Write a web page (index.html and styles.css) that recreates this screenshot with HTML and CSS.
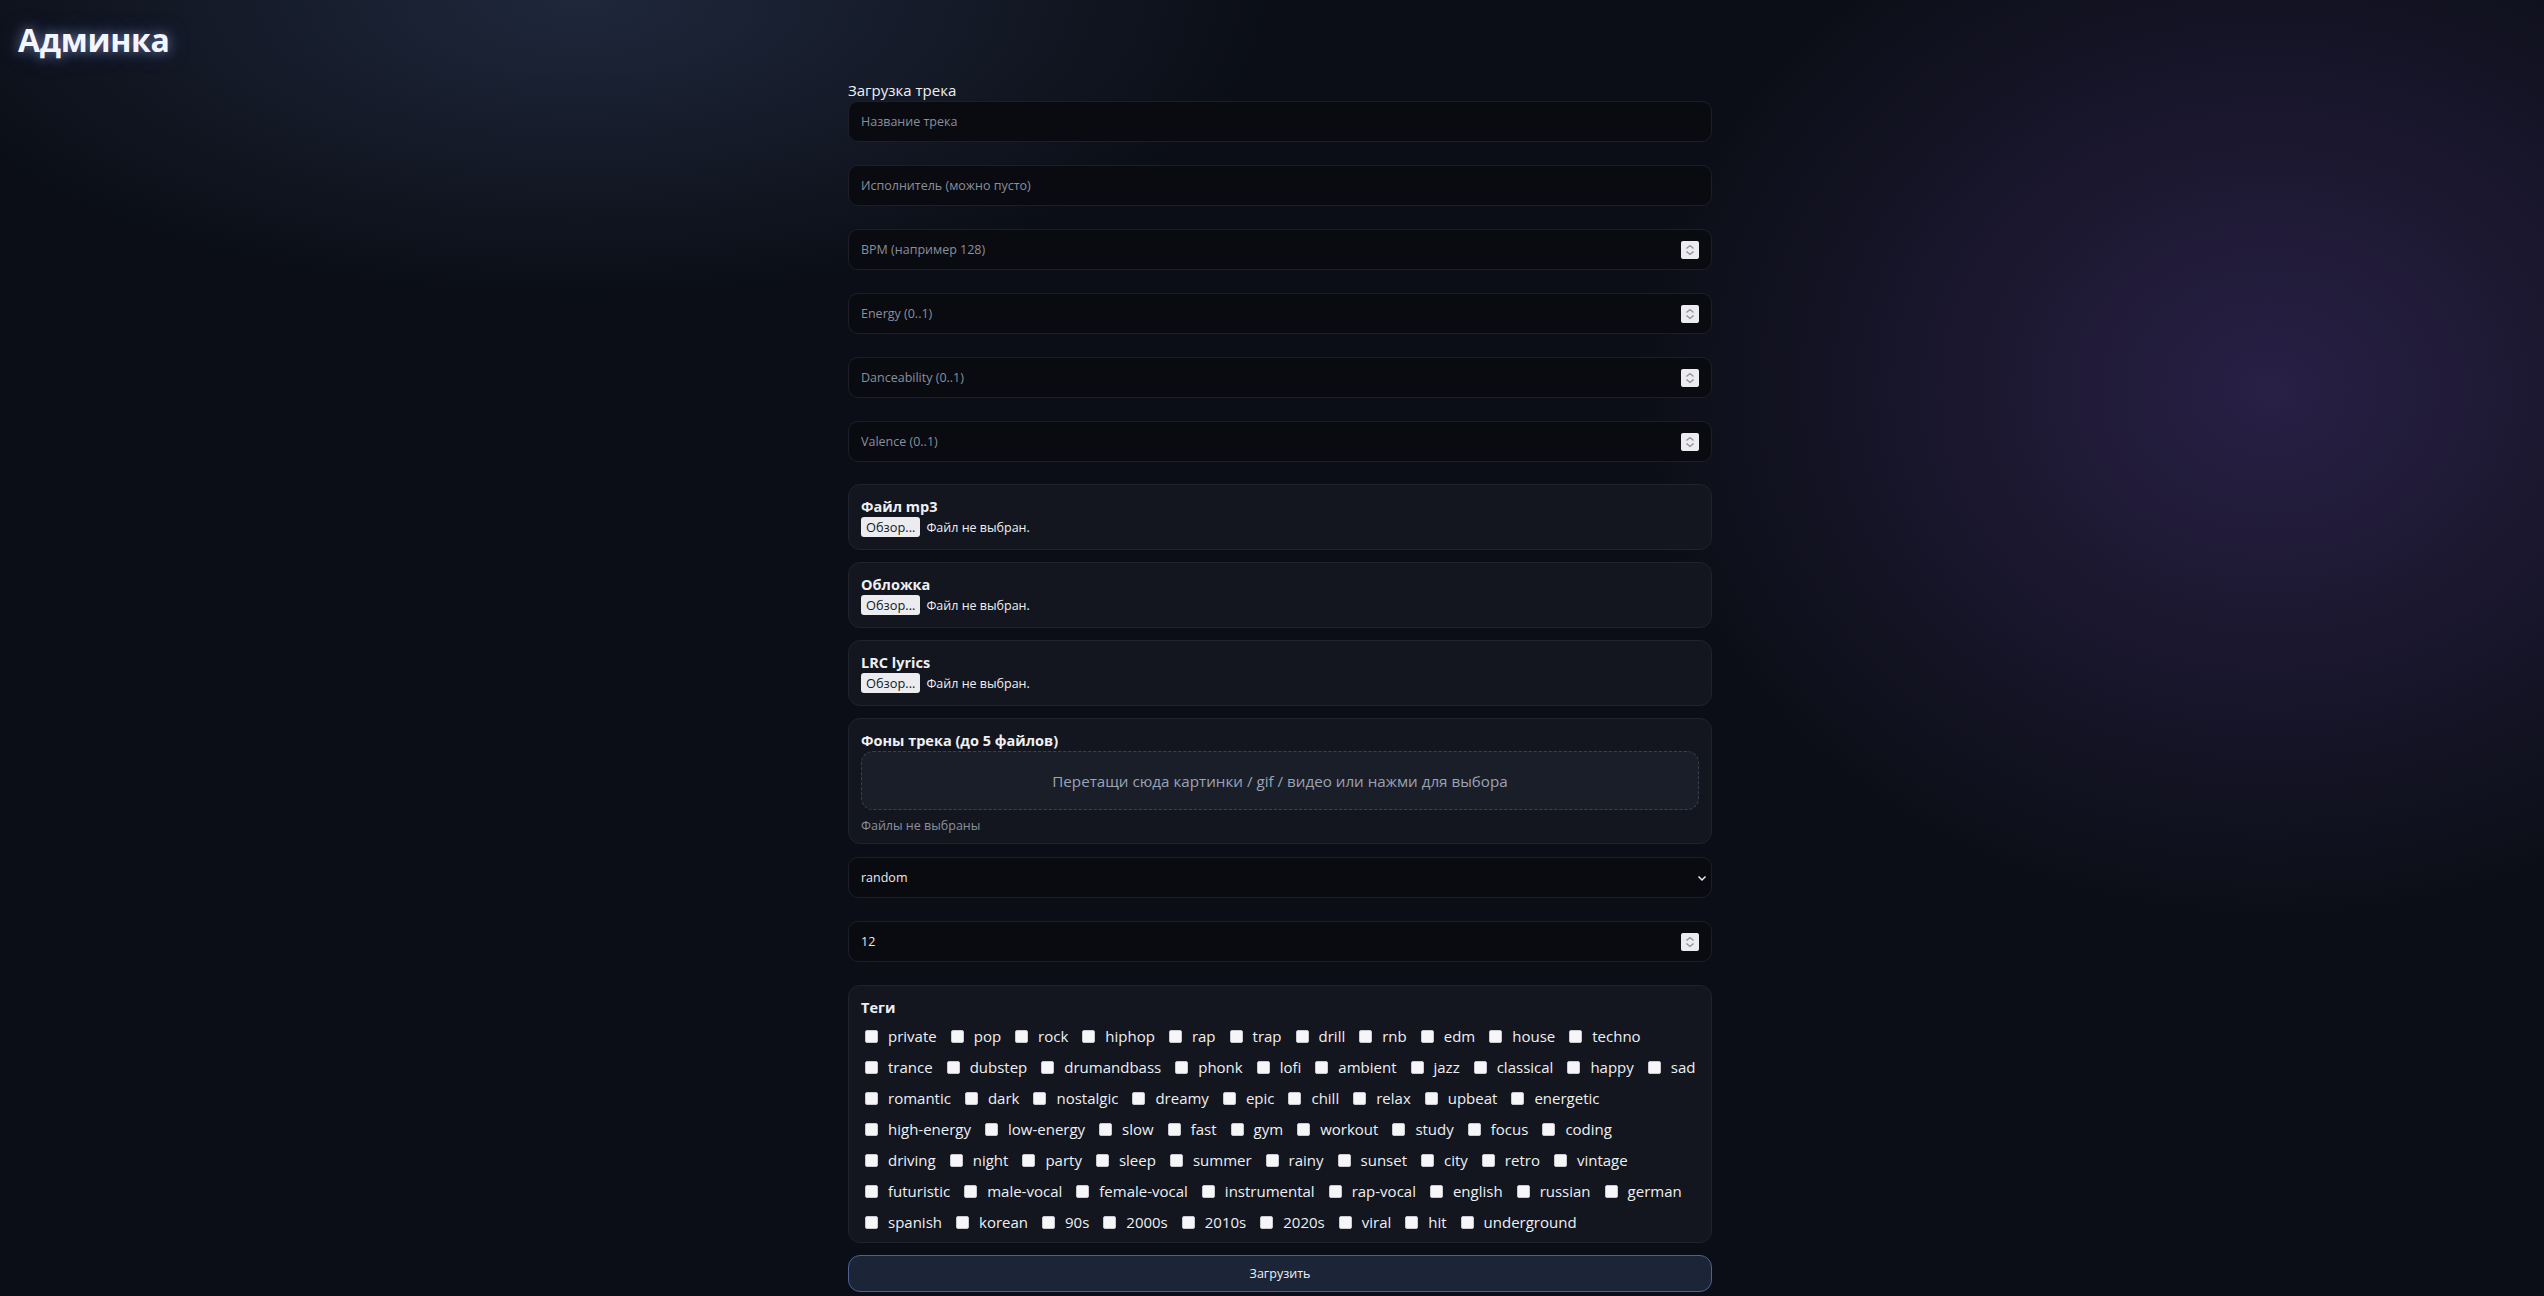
FILE: index.html
```html
<!DOCTYPE html>
<html lang="ru">
<head>
    <meta charset="UTF-8">
    <meta name="viewport" content="width=device-width, initial-scale=1.0">
    <title>Админка</title>
    <link rel="stylesheet" href="styles.css">
</head>
<body>
    <h1 class="page-title">Админка</h1>

    <!-- Upload form -->
    <form class="upload-form" id="uploadForm">
        <div class="form-title">Загрузка трека</div>

        <input class="field" type="text" placeholder="Название трека">
        <input class="field" type="text" placeholder="Исполнитель (можно пусто)">

        <div class="field field-number">
            <input type="number" placeholder="BPM (например 128)">
            <svg class="spin" width="18" height="18" viewBox="0 0 18 18"><path d="M5.5 7.5 9 4.5l3.5 3M5.5 10.5 9 13.5l3.5-3"/></svg>
        </div>
        <div class="field field-number">
            <input type="number" placeholder="Energy (0..1)">
            <svg class="spin" width="18" height="18" viewBox="0 0 18 18"><path d="M5.5 7.5 9 4.5l3.5 3M5.5 10.5 9 13.5l3.5-3"/></svg>
        </div>
        <div class="field field-number">
            <input type="number" placeholder="Danceability (0..1)">
            <svg class="spin" width="18" height="18" viewBox="0 0 18 18"><path d="M5.5 7.5 9 4.5l3.5 3M5.5 10.5 9 13.5l3.5-3"/></svg>
        </div>
        <div class="field field-number field-last">
            <input type="number" placeholder="Valence (0..1)">
            <svg class="spin" width="18" height="18" viewBox="0 0 18 18"><path d="M5.5 7.5 9 4.5l3.5 3M5.5 10.5 9 13.5l3.5-3"/></svg>
        </div>

        <div class="card">
            <div class="card-label">Файл mp3</div>
            <label class="file-row">
                <input type="file" accept=".mp3">
                <span class="file-btn">Обзор...</span>
                <span class="file-name">Файл не выбран.</span>
            </label>
        </div>

        <div class="card">
            <div class="card-label">Обложка</div>
            <label class="file-row">
                <input type="file" accept="image/*">
                <span class="file-btn">Обзор...</span>
                <span class="file-name">Файл не выбран.</span>
            </label>
        </div>

        <div class="card">
            <div class="card-label">LRC lyrics</div>
            <label class="file-row">
                <input type="file" accept=".lrc">
                <span class="file-btn">Обзор...</span>
                <span class="file-name">Файл не выбран.</span>
            </label>
        </div>

        <div class="card card-drop">
            <div class="card-label">Фоны трека (до 5 файлов)</div>
            <label class="dropzone">
                <input type="file" multiple>
                Перетащи сюда картинки / gif / видео или нажми для выбора
            </label>
            <div class="drop-hint">Файлы не выбраны</div>
        </div>

        <div class="field field-select">
            <select>
                <option>random</option>
            </select>
            <svg class="chevron" width="10" height="8" viewBox="0 0 10 8"><path d="M1.5 2.5 5 6l3.5-3.5"/></svg>
        </div>

        <div class="field field-number">
            <input type="number" value="12">
            <svg class="spin" width="18" height="18" viewBox="0 0 18 18"><path d="M5.5 7.5 9 4.5l3.5 3M5.5 10.5 9 13.5l3.5-3"/></svg>
        </div>

        <div class="card card-tags">
            <div class="card-label">Теги</div>
            <div class="tags">
                <label class="tag"><input type="checkbox">private</label>
                <label class="tag"><input type="checkbox">pop</label>
                <label class="tag"><input type="checkbox">rock</label>
                <label class="tag"><input type="checkbox">hiphop</label>
                <label class="tag"><input type="checkbox">rap</label>
                <label class="tag"><input type="checkbox">trap</label>
                <label class="tag"><input type="checkbox">drill</label>
                <label class="tag"><input type="checkbox">rnb</label>
                <label class="tag"><input type="checkbox">edm</label>
                <label class="tag"><input type="checkbox">house</label>
                <label class="tag"><input type="checkbox">techno</label>
                <label class="tag"><input type="checkbox">trance</label>
                <label class="tag"><input type="checkbox">dubstep</label>
                <label class="tag"><input type="checkbox">drumandbass</label>
                <label class="tag"><input type="checkbox">phonk</label>
                <label class="tag"><input type="checkbox">lofi</label>
                <label class="tag"><input type="checkbox">ambient</label>
                <label class="tag"><input type="checkbox">jazz</label>
                <label class="tag"><input type="checkbox">classical</label>
                <label class="tag"><input type="checkbox">happy</label>
                <label class="tag"><input type="checkbox">sad</label>
                <label class="tag"><input type="checkbox">romantic</label>
                <label class="tag"><input type="checkbox">dark</label>
                <label class="tag"><input type="checkbox">nostalgic</label>
                <label class="tag"><input type="checkbox">dreamy</label>
                <label class="tag"><input type="checkbox">epic</label>
                <label class="tag"><input type="checkbox">chill</label>
                <label class="tag"><input type="checkbox">relax</label>
                <label class="tag"><input type="checkbox">upbeat</label>
                <label class="tag"><input type="checkbox">energetic</label>
                <label class="tag"><input type="checkbox">high-energy</label>
                <label class="tag"><input type="checkbox">low-energy</label>
                <label class="tag"><input type="checkbox">slow</label>
                <label class="tag"><input type="checkbox">fast</label>
                <label class="tag"><input type="checkbox">gym</label>
                <label class="tag"><input type="checkbox">workout</label>
                <label class="tag"><input type="checkbox">study</label>
                <label class="tag"><input type="checkbox">focus</label>
                <label class="tag"><input type="checkbox">coding</label>
                <span class="tags-break"></span>
                <label class="tag"><input type="checkbox">driving</label>
                <label class="tag"><input type="checkbox">night</label>
                <label class="tag"><input type="checkbox">party</label>
                <label class="tag"><input type="checkbox">sleep</label>
                <label class="tag"><input type="checkbox">summer</label>
                <label class="tag"><input type="checkbox">rainy</label>
                <label class="tag"><input type="checkbox">sunset</label>
                <label class="tag"><input type="checkbox">city</label>
                <label class="tag"><input type="checkbox">retro</label>
                <label class="tag"><input type="checkbox">vintage</label>
                <label class="tag"><input type="checkbox">futuristic</label>
                <label class="tag"><input type="checkbox">male-vocal</label>
                <label class="tag"><input type="checkbox">female-vocal</label>
                <label class="tag"><input type="checkbox">instrumental</label>
                <label class="tag"><input type="checkbox">rap-vocal</label>
                <label class="tag"><input type="checkbox">english</label>
                <label class="tag"><input type="checkbox">russian</label>
                <label class="tag"><input type="checkbox">german</label>
                <label class="tag"><input type="checkbox">spanish</label>
                <label class="tag"><input type="checkbox">korean</label>
                <label class="tag"><input type="checkbox">90s</label>
                <label class="tag"><input type="checkbox">2000s</label>
                <label class="tag"><input type="checkbox">2010s</label>
                <label class="tag"><input type="checkbox">2020s</label>
                <label class="tag"><input type="checkbox">viral</label>
                <label class="tag"><input type="checkbox">hit</label>
                <label class="tag"><input type="checkbox">underground</label>
            </div>
        </div>

        <button type="submit" class="submit-btn">Загрузить</button>
    </form>

    <script>
        document.getElementById('uploadForm').addEventListener('submit', function(e) {
            e.preventDefault();
        });
    </script>
</body>
</html>
```

FILE: styles.css
```css
* {
    box-sizing: border-box;
}

body {
    margin: 0;
    padding: 0 0 0 16px;
    min-height: 100vh;
    background:
        radial-gradient(ellipse 700px 300px at 580px 0, rgba(34, 44, 66, 0.85), transparent 100%),
        radial-gradient(ellipse 640px 540px at 2270px 390px, rgba(46, 35, 78, 0.85), transparent 100%),
        #0b0e16;
    color: #eef0f4;
    font-family: "Open Sans", "Noto Sans", sans-serif;
}

.page-title {
    margin: 20px 0 20px 2px;
    font-size: 32px;
    line-height: 40px;
    font-weight: 700;
    letter-spacing: -0.3px;
    color: #f4f6ff;
    text-shadow: 0 0 12px rgba(170, 190, 255, 0.55), 0 0 26px rgba(120, 140, 230, 0.3);
}

.upload-form {
    width: 864px;
    margin: 0 auto;
}

.form-title {
    margin-bottom: 1px;
    font-size: 15px;
    line-height: 20px;
}

/* Inputs */
.field {
    display: flex;
    align-items: center;
    width: 100%;
    height: 41px;
    margin-bottom: 23px;
    padding: 0 12px;
    background: #090b11;
    border: 1px solid #1c1f29;
    border-radius: 10px;
    color: #e8eaf0;
    font-family: inherit;
    font-size: 12.5px;
    outline: none;
}

.field-last {
    margin-bottom: 22px;
}

.field::placeholder,
.field input::placeholder {
    color: #8a8f9b;
}

.field input,
.field select {
    flex: 1;
    min-width: 0;
    padding: 0;
    background: none;
    border: none;
    color: #e8eaf0;
    font: inherit;
    outline: none;
    appearance: none;
    -moz-appearance: textfield;
}

.field input::-webkit-inner-spin-button,
.field input::-webkit-outer-spin-button {
    -webkit-appearance: none;
    margin: 0;
}

.spin {
    flex-shrink: 0;
    background: #ececf0;
    border-radius: 2px;
}

.spin path {
    fill: none;
    stroke: #8d8d95;
    stroke-width: 1.3;
}

.field-select {
    padding-right: 4px;
}

.chevron {
    flex-shrink: 0;
}

.chevron path {
    fill: none;
    stroke: #e8eaf0;
    stroke-width: 1.5;
}

/* Cards */
.card {
    margin-bottom: 12px;
    padding: 12px;
    background: #13161e;
    border: 1px solid #1f232d;
    border-radius: 12px;
}

.card-label {
    margin-bottom: 1px;
    font-size: 14.5px;
    line-height: 19px;
    font-weight: 700;
}

.file-row {
    display: flex;
    align-items: center;
    gap: 6px;
    height: 20px;
    cursor: pointer;
}

.file-row input,
.dropzone input {
    display: none;
}

.file-btn {
    height: 20px;
    padding: 0 5px;
    background: #ececf0;
    border-radius: 3px;
    color: #15161a;
    font-size: 12.8px;
    line-height: 20px;
}

.file-name {
    font-size: 12.5px;
}

.card-drop {
    margin-bottom: 13px;
    padding-bottom: 9px;
}

.dropzone {
    display: flex;
    align-items: center;
    justify-content: center;
    height: 59px;
    background: #1a1e29;
    border: 1px dashed #3a4050;
    border-radius: 12px;
    color: #9ba3b4;
    font-size: 15.2px;
    cursor: pointer;
}

.drop-hint {
    margin-top: 8px;
    color: #8a909c;
    font-size: 12.5px;
    line-height: 16px;
}

/* Tags */
.card-tags {
    padding-bottom: 4.5px;
}

.tags {
    display: flex;
    flex-wrap: wrap;
    column-gap: 10px;
    margin-top: 3.5px;
}

.tags-break {
    flex-basis: 100%;
    height: 0;
}

.tag {
    display: inline-flex;
    align-items: center;
    gap: 10px;
    height: 31px;
    font-size: 15px;
    cursor: pointer;
}

.tag input {
    appearance: none;
    width: 13px;
    height: 13px;
    margin: 0 0 0 4px;
    background: #f6f6f8;
    border: 1px solid #c9c9d0;
    border-radius: 2px;
}

.tag input:checked {
    background: #6d8fd6;
}

.submit-btn {
    display: block;
    width: 100%;
    height: 37px;
    background: #1c2538;
    border: 1px solid #4b6290;
    border-radius: 12px;
    color: #eef0f4;
    font-family: inherit;
    font-size: 12.5px;
    cursor: pointer;
}

.submit-btn:hover {
    background: #222c44;
}
```
